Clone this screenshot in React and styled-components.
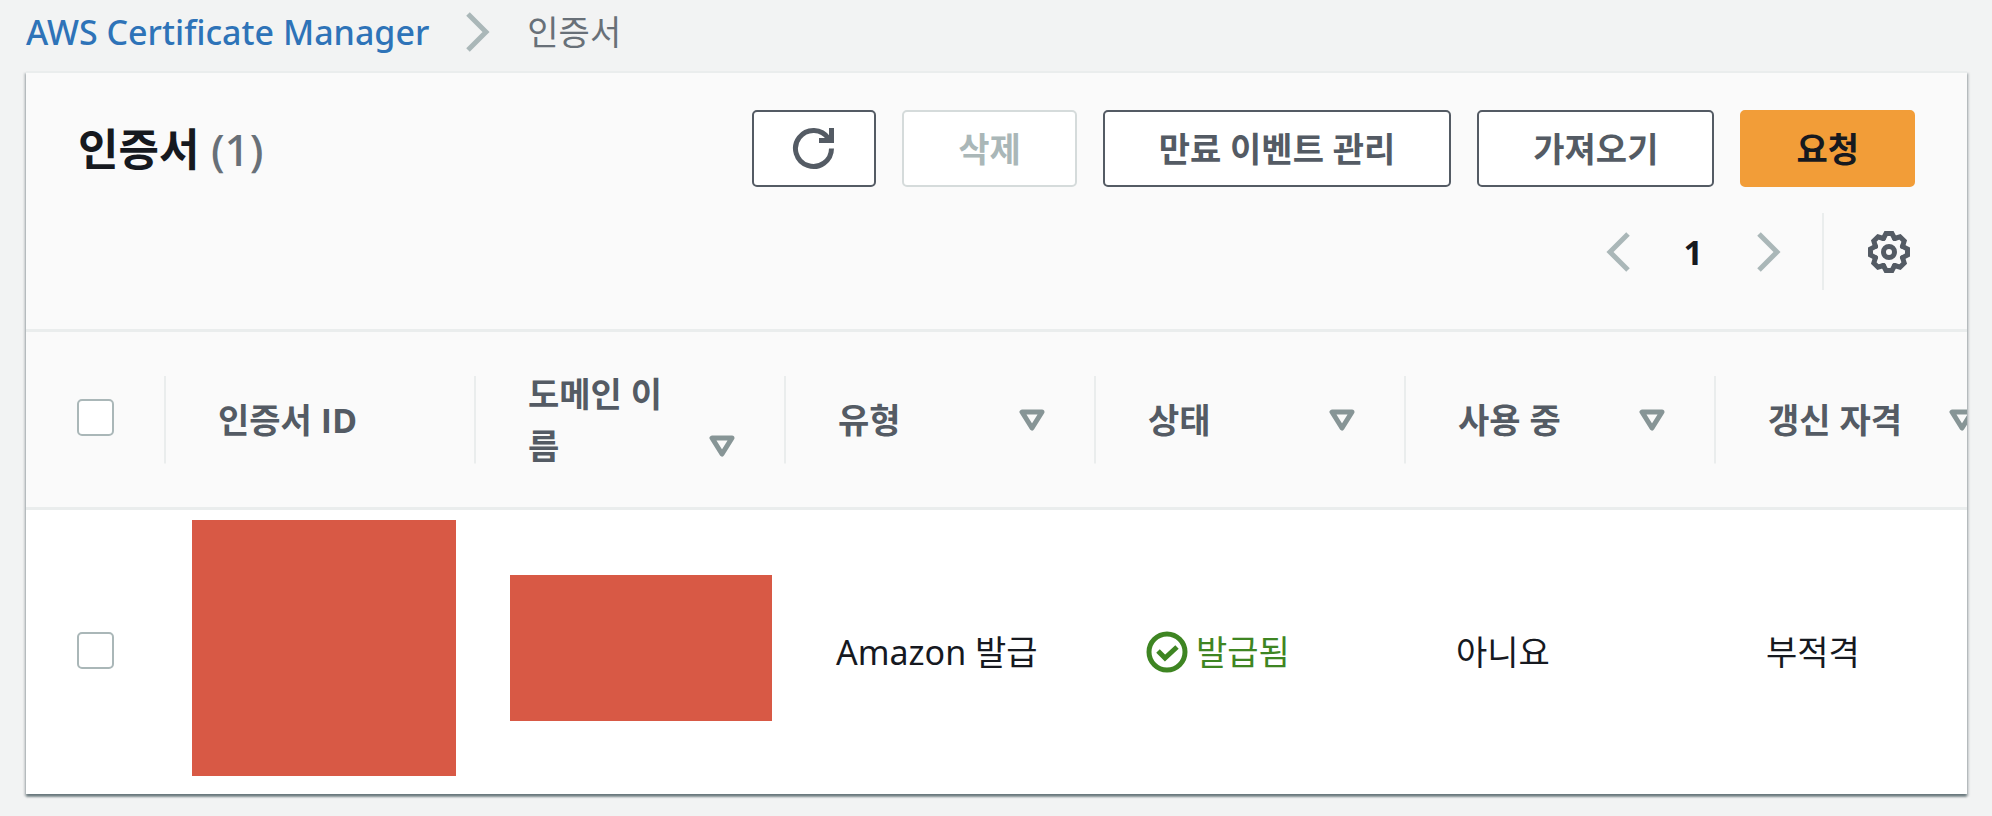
/**
 * Dependencies
 */

import React from 'react';
import styled, { createGlobalStyle } from 'styled-components';

/**
 * Define styles
 */

const boldFont = '"Open Sans", "Noto Sans CJK KR", sans-serif';

const GlobalStyle = createGlobalStyle`
  * {
    box-sizing: border-box;
  }

  body {
    margin: 0;
    background-color: #f2f3f3;
    color: #16191f;
    font-family: "Noto Sans", "Noto Sans CJK KR", sans-serif;
    font-size: 34px;
    line-height: 52px;
  }
`

const Page = styled.div`
  padding: 0 25px 18px 26px;
`

const Breadcrumb = styled.nav`
  display: flex;
  align-items: center;
  gap: 37px;
  height: 71px;
  padding-bottom: 8px;
  color: #687078;
`

const BreadcrumbLink = styled.a`
  color: #2e73b8;
  font-weight: 500;
  text-decoration: none;
`

const Panel = styled.section`
  border-top: 2px solid #eaeded;
  background-color: #fff;
  box-shadow:
    0 3px 2px 0 rgba(0, 28, 36, 0.4),
    2px 2px 2px 0 rgba(0, 28, 36, 0.15),
    -2px 2px 2px 0 rgba(0, 28, 36, 0.15);
`

const PanelHeader = styled.header`
  padding: 37px 52px 39px;
  border-bottom: 3px solid #eaeded;
  background-color: #fafafa;
`

const Toolbar = styled.div`
  display: flex;
  align-items: center;
  justify-content: space-between;
`

const Title = styled.h2`
  margin: 0;
  font-size: 44px;
  font-weight: 700;
`

const Count = styled.span`
  color: #687078;
  font-weight: 500;
`

const Actions = styled.div`
  display: flex;
  gap: 26px;
`

const Button = styled.button`
  display: flex;
  align-items: center;
  justify-content: center;
  height: 77px;
  padding: 0 ${props => props.$icon ? 38 : 54}px;
  border: 2px solid ${props => props.$primary ? '#f29d38' : '#545b64'};
  border-radius: 5px;
  background-color: ${props => props.$primary ? '#f29d38' : '#fff'};
  color: ${props => props.$primary ? '#16191f' : '#545b64'};
  font: inherit;
  font-family: ${boldFont};
  font-weight: 700;
  cursor: pointer;

  &:disabled {
    border-color: #d5dbdb;
    color: #aab7b8;
    cursor: default;
  }
`

const Controls = styled.div`
  display: flex;
  align-items: center;
  justify-content: flex-end;
  margin-top: 26px;
`

const Pagination = styled.nav`
  display: flex;
  align-items: center;
  gap: 54px;
  height: 77px;
  padding-right: 41px;
  border-right: 2px solid #eaeded;
`

const PageNumber = styled.span`
  font-family: ${boldFont};
  font-weight: 700;
`

const IconButton = styled.button`
  display: flex;
  padding: 0;
  border: 0;
  background: none;
  color: ${props => props.$muted ? '#aab7b8' : '#545b64'};
  cursor: pointer;
`

const Settings = styled.div`
  padding: 0 4px 0 43px;
`

const TableScroll = styled.div`
  overflow-x: auto;
  scrollbar-width: none;
`

const Table = styled.table`
  width: 2000px;
  table-layout: fixed;
  border-collapse: separate;
  border-spacing: 0;
  text-align: left;
`

const Col = styled.col`
  width: ${props => props.$select ? 140 : 310}px;
`

const HeadCell = styled.th`
  height: 178px;
  padding: 0 51px 0 ${props => props.$select ? 51 : 52}px;
  border-bottom: 3px solid #eaeded;
  background: #fafafa linear-gradient(#eaeded, #eaeded) right center / 2px 50% no-repeat;
  color: #545b64;
  font-family: ${boldFont};
`

const HeadContent = styled.div`
  display: flex;
  align-items: flex-end;
  justify-content: space-between;
  gap: 26px;
`

const SortButton = styled(IconButton)`
  align-items: center;
  height: 52px;
  color: #879596;
`

const Cell = styled.td`
  padding: 0 ${props => props.$select ? 0 : 50}px 0 ${props => props.$select ? 51 : 50}px;
`

const BlockCell = styled.td`
  padding: 10px 0 18px ${props => props.$inset}px;
`

const Block = styled.div`
  width: ${props => props.$width}px;
  height: ${props => props.$height}px;
  background-color: #d85945;
`

const Checkbox = styled.input`
  display: block;
  appearance: none;
  width: 37px;
  height: 37px;
  margin: 0 0 4px;
  border: 2px solid #aab7b8;
  border-radius: 5px;
  background-color: #fff;

  &:checked {
    background-color: #2e73b8;
  }
`

const Status = styled.span`
  display: flex;
  align-items: center;
  gap: 8px;
  color: #3e8522;
  white-space: nowrap;
`

/**
 * Define icons
 */

function ChevronIcon({ left }) {
  return (
    <svg width="24" height="40" viewBox="0 0 24 40" fill="none" stroke="#aab7b8" strokeWidth="5" aria-hidden="true">
      <path d={left ? 'M22 2 4 20l18 18' : 'M2 2l18 18L2 38'} />
    </svg>
  );
}

function RefreshIcon() {
  return (
    <svg width="44" height="44" viewBox="0 0 44 44" fill="none" stroke="currentColor" strokeWidth="5" aria-hidden="true">
      <path d="M39.5 21.500A18 18 0 1 1 36.500 11.500" />
      <path d="M27 13.500h12.500V1" />
    </svg>
  );
}

const teeth = [0, 45, 90, 135, 180, 225, 270, 315];

function GearIcon() {
  return (
    <svg width="44" height="44" viewBox="-22 -22 44 44" fill="none" stroke="currentColor" strokeWidth="5" aria-hidden="true">
      {teeth.map(angle => (
        <path key={angle} d="M-5.600-13.500-3-18.500H3L5.600-13.500" strokeLinecap="round" transform={`rotate(${angle})`} />
      ))}
      <circle r="5.500" />
    </svg>
  );
}

function SortIcon() {
  return (
    <svg width="26" height="22" viewBox="0 0 26 22" fill="none" stroke="currentColor" strokeWidth="5" strokeLinejoin="round" aria-hidden="true">
      <path d="M3 3h20L13 19z" />
    </svg>
  );
}

function CheckIcon() {
  return (
    <svg width="42" height="42" viewBox="0 0 42 42" fill="none" stroke="currentColor" strokeWidth="5" aria-hidden="true">
      <circle cx="21" cy="21" r="18" />
      <path d="M12 20l7 7 12-11" />
    </svg>
  );
}

/**
 * Define component
 */

const columns = [
  { label: '인증서 ID' },
  { label: '도메인 이름', sortable: true },
  { label: '유형', sortable: true },
  { label: '상태', sortable: true },
  { label: '사용 중', sortable: true },
  { label: '갱신 자격', sortable: true },
];

function App() {
  return (
    <Page>
      <GlobalStyle />
      <Breadcrumb>
        <BreadcrumbLink href="#">AWS Certificate Manager</BreadcrumbLink>
        <ChevronIcon />
        <span>인증서</span>
      </Breadcrumb>
      <Panel>
        <PanelHeader>
          <Toolbar>
            <Title>인증서 <Count>(1)</Count></Title>
            <Actions>
              <Button $icon aria-label="새로 고침"><RefreshIcon /></Button>
              <Button disabled>삭제</Button>
              <Button>만료 이벤트 관리</Button>
              <Button>가져오기</Button>
              <Button $primary>요청</Button>
            </Actions>
          </Toolbar>
          <Controls>
            <Pagination>
              <IconButton $muted aria-label="이전 페이지"><ChevronIcon left /></IconButton>
              <PageNumber>1</PageNumber>
              <IconButton $muted aria-label="다음 페이지"><ChevronIcon /></IconButton>
            </Pagination>
            <Settings>
              <IconButton aria-label="기본 설정"><GearIcon /></IconButton>
            </Settings>
          </Controls>
        </PanelHeader>
        <TableScroll>
          <Table>
            <colgroup>
              <Col $select />
              {columns.map(column => <Col key={column.label} />)}
            </colgroup>
            <thead>
              <tr>
                <HeadCell $select>
                  <Checkbox type="checkbox" aria-label="모두 선택" />
                </HeadCell>
                {columns.map(column => (
                  <HeadCell key={column.label}>
                    <HeadContent>
                      <span>{column.label}</span>
                      {column.sortable && (
                        <SortButton aria-label={`${column.label} 정렬`}><SortIcon /></SortButton>
                      )}
                    </HeadContent>
                  </HeadCell>
                ))}
              </tr>
            </thead>
            <tbody>
              <tr>
                <Cell $select>
                  <Checkbox type="checkbox" aria-label="인증서 선택" />
                </Cell>
                <BlockCell $inset={26}><Block $width={264} $height={256} /></BlockCell>
                <BlockCell $inset={34}><Block $width={262} $height={146} /></BlockCell>
                <Cell>Amazon 발급</Cell>
                <Cell><Status><CheckIcon />발급됨</Status></Cell>
                <Cell>아니요</Cell>
                <Cell>부적격</Cell>
              </tr>
            </tbody>
          </Table>
        </TableScroll>
      </Panel>
    </Page>
  );
}

/**
 * Export component
 */

export default App;
